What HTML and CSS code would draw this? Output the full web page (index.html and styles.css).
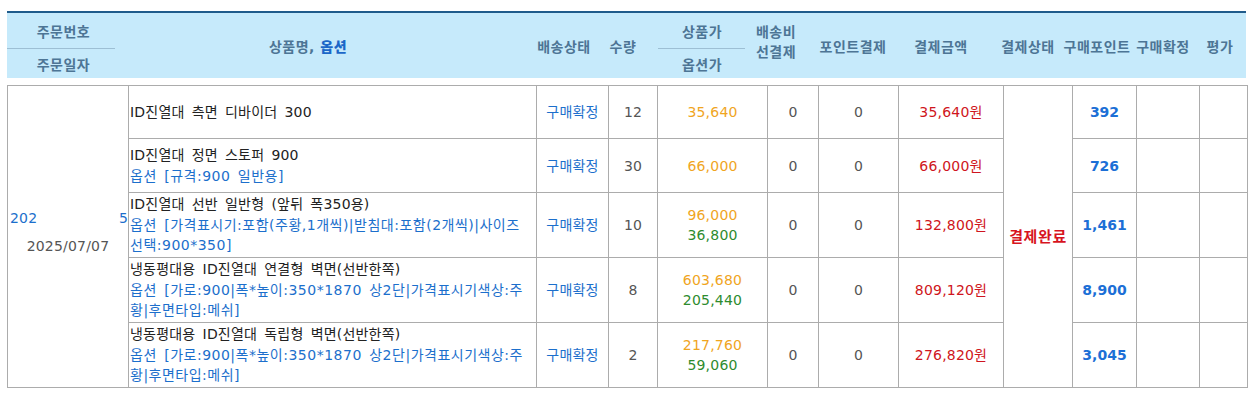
FILE: index.html
```html
<!DOCTYPE html>
<html lang="ko">
<head>
<meta charset="utf-8">
<title>주문내역</title>
<link rel="stylesheet" href="styles.css">
</head>
<body>
<div class="page">
  <div class="head">
    <div class="h w-no split">
      <span class="half top">주문번호</span>
      <i class="rule r-no"></i>
      <span class="half bot">주문일자</span>
    </div>
    <div class="h w-prod">상품명,&nbsp;<b class="opt-h">옵션</b></div>
    <div class="h w-ship">배송상태</div>
    <div class="h w-qty">수량</div>
    <div class="h w-price split">
      <span class="half top">상품가</span>
      <i class="rule r-price"></i>
      <span class="half bot">옵션가</span>
    </div>
    <div class="h w-fee two">배송비<br>선결제</div>
    <div class="h w-pt">포인트결제</div>
    <div class="h w-amt">결제금액</div>
    <div class="h w-st">결제상태</div>
    <div class="h w-bp">구매포인트</div>
    <div class="h w-cf">구매확정</div>
    <div class="h w-rv">평가</div>
  </div>

  <table class="orders">
    <colgroup>
      <col class="c-no"><col class="c-prod"><col class="c-ship"><col class="c-qty">
      <col class="c-price"><col class="c-fee"><col class="c-pt"><col class="c-amt">
      <col class="c-st"><col class="c-bp"><col class="c-cf"><col class="c-rv">
    </colgroup>
    <tbody>
      <tr class="r1">
        <td rowspan="5" class="no">
          <div class="ordno"><span>202</span><span>5</span></div>
          <div class="date">2025/07/07</div>
        </td>
        <td class="prod">ID진열대 측면 디바이더 300</td>
        <td class="ship">구매확정</td>
        <td class="num">12</td>
        <td class="price"><span class="pp">35,640</span></td>
        <td class="num">0</td>
        <td class="num">0</td>
        <td class="amt">35,640원</td>
        <td rowspan="5" class="st">결제완료</td>
        <td class="bp">392</td>
        <td></td>
        <td></td>
      </tr>
      <tr class="r2">
        <td class="prod">ID진열대 정면 스토퍼 900<br><span class="opt">옵션 [규격:900 일반용]</span></td>
        <td class="ship">구매확정</td>
        <td class="num">30</td>
        <td class="price"><span class="pp">66,000</span></td>
        <td class="num">0</td>
        <td class="num">0</td>
        <td class="amt">66,000원</td>
        <td class="bp">726</td>
        <td></td>
        <td></td>
      </tr>
      <tr class="r3">
        <td class="prod">ID진열대 선반 일반형 (앞뒤 폭350용)<br><span class="opt">옵션 [가격표시기:포함(주황,1개씩)|받침대:포함(2개씩)|사이즈<br>선택:900*350]</span></td>
        <td class="ship">구매확정</td>
        <td class="num">10</td>
        <td class="price"><span class="pp">96,000</span><br><span class="op">36,800</span></td>
        <td class="num">0</td>
        <td class="num">0</td>
        <td class="amt">132,800원</td>
        <td class="bp">1,461</td>
        <td></td>
        <td></td>
      </tr>
      <tr class="r4">
        <td class="prod">냉동평대용 ID진열대 연결형 벽면(선반한쪽)<br><span class="opt">옵션 [가로:900|폭*높이:350*1870 상2단|가격표시기색상:주<br>황|후면타입:메쉬]</span></td>
        <td class="ship">구매확정</td>
        <td class="num">8</td>
        <td class="price"><span class="pp">603,680</span><br><span class="op">205,440</span></td>
        <td class="num">0</td>
        <td class="num">0</td>
        <td class="amt">809,120원</td>
        <td class="bp">8,900</td>
        <td></td>
        <td></td>
      </tr>
      <tr class="r5">
        <td class="prod">냉동평대용 ID진열대 독립형 벽면(선반한쪽)<br><span class="opt">옵션 [가로:900|폭*높이:350*1870 상2단|가격표시기색상:주<br>황|후면타입:메쉬]</span></td>
        <td class="ship">구매확정</td>
        <td class="num">2</td>
        <td class="price"><span class="pp">217,760</span><br><span class="op">59,060</span></td>
        <td class="num">0</td>
        <td class="num">0</td>
        <td class="amt">276,820원</td>
        <td class="bp">3,045</td>
        <td></td>
        <td></td>
      </tr>
    </tbody>
  </table>
</div>
</body>
</html>
```

FILE: styles.css
```css
html, body {
  margin: 0;
  padding: 0;
  background: #ffffff;
}

body {
  font-family: "DejaVu Sans", "Noto Sans CJK KR", sans-serif;
  font-size: 14px;
  letter-spacing: 0.2px;
  word-spacing: 2.5px;
  color: #222222;
}

.page {
  padding: 11px 0 0 7px;
  width: 1240px;
}

/* ---------- header ---------- */
.head {
  display: flex;
  width: 1239px;
  height: 65px;
  border-top: 2px solid #1f5b8b;
  background: #c6eafb;
  color: #4d7595;
  font-weight: bold;
  font-size: 14px;
  letter-spacing: 0.5px;
  word-spacing: 0;
}

.h {
  display: flex;
  align-items: center;
  justify-content: center;
  white-space: nowrap;
  text-align: center;
}

.h.split {
  flex-direction: column;
  align-items: stretch;
  justify-content: flex-start;
}

.half {
  display: flex;
  align-items: center;
  justify-content: center;
}

.half.top { height: 35px; }
.half.bot { height: 29px; }

.rule {
  display: block;
  height: 1px;
  background: #9dbfd4;
}

.r-no { margin-right: 5px; }
.r-price { margin: 0 9px 0 8px; }

.h.two { line-height: 20px; padding-bottom: 7px; box-sizing: border-box; }

.opt-h { color: #1c67c8; }

.w-no { width: 113px; }
.w-prod { width: 376px; }
.w-ship { width: 64px; margin-left: 36px; }
.w-qty { width: 54px; }
.w-price { width: 104px; }
.w-fee { width: 44px; }
.w-pt { width: 110px; }
.w-amt { width: 66px; }
.w-st { width: 60px; margin-left: 24px; }
.w-bp { width: 78px; }
.w-cf { width: 54px; }
.w-rv { width: 48px; margin-left: 6px; }

/* ---------- body table ---------- */
.orders {
  margin-top: 7px;
  border-collapse: collapse;
  table-layout: fixed;
  width: 1241px;
}

.orders td {
  border: 1px solid #acacac;
  padding: 0;
  vertical-align: middle;
  text-align: center;
  line-height: 20px;
  color: #555555;
  white-space: nowrap;
  overflow: hidden;
}

.c-no { width: 121px; }
.c-prod { width: 408px; }
.c-ship { width: 72px; }
.c-qty { width: 49px; }
.c-price { width: 110px; }
.c-fee { width: 51px; }
.c-pt { width: 80px; }
.c-amt { width: 105px; }
.c-st { width: 69px; }
.c-bp { width: 64px; }
.c-cf { width: 63px; }
.c-rv { width: 48px; }

.r1 { height: 53px; }
.r2 { height: 54px; }
.r3, .r4, .r5 { height: 65px; }

.orders td.no {
  padding: 0 0 10px 0;
}

.ordno {
  display: flex;
  justify-content: space-between;
  padding: 0 0 0 2px;
  color: #1c6fcc;
  line-height: 20px;
}

.date {
  margin-top: 8px;
  color: #555555;
  line-height: 20px;
}

.orders td.prod {
  text-align: left;
  padding-left: 1px;
  color: #222222;
  line-height: 20.5px;
}

.opt {
  color: #1c6fcc;
  letter-spacing: 0.5px;
}

.orders td.ship { color: #1c6fcc; }

.pp { color: #f0a51e; }
.op { color: #2e8b2e; }

.orders td.amt { color: #cf1520; }

.orders td.st {
  color: #d7141e;
  font-weight: bold;
  font-size: 15px;
  letter-spacing: 0.6px;
}

.orders td.bp {
  color: #1c6fd6;
  font-weight: bold;
  font-size: 14px;
  letter-spacing: 0;
}
```
